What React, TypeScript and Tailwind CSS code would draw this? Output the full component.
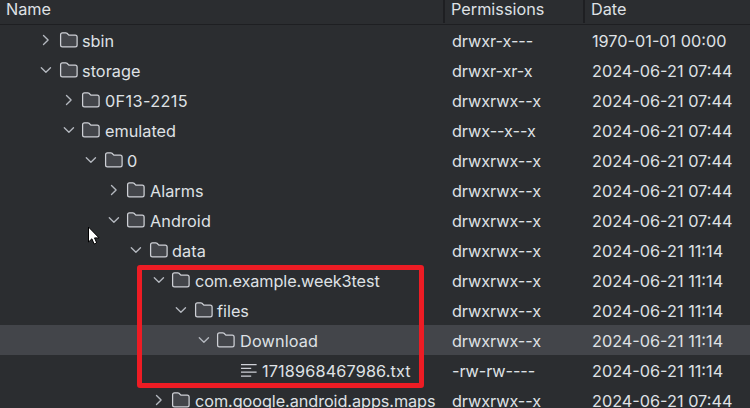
type Kind = "open" | "closed" | "file";

const rows: { name: string; pad: string; track: string; kind: Kind; perm: string; date: string; selected?: boolean; tight?: boolean }[] = [
  { name: "sbin", pad: "pl-[38px]", track: "", kind: "closed", perm: "drwxr-x---", date: "1970-01-01 00:00" },
  { name: "storage", pad: "pl-[38px]", track: "tracking-[0.06px]", kind: "open", perm: "drwxr-xr-x", date: "2024-06-21 07:44" },
  { name: "0F13-2215", pad: "pl-[61px]", tight: true, track: "tracking-[0.35px]", kind: "closed", perm: "drwxrwx--x", date: "2024-06-21 07:44" },
  { name: "emulated", pad: "pl-[61px]", tight: true, track: "", kind: "open", perm: "drwx--x--x", date: "2024-06-21 07:44" },
  { name: "0", pad: "pl-[83px]", track: "", kind: "open", perm: "drwxrwx--x", date: "2024-06-21 07:44" },
  { name: "Alarms", pad: "pl-[106px]", tight: true, track: "", kind: "closed", perm: "drwxrwx--x", date: "2024-06-21 07:44" },
  { name: "Android", pad: "pl-[106px]", tight: true, track: "tracking-[0.1px]", kind: "open", perm: "drwxrwx--x", date: "2024-06-21 07:44" },
  { name: "data", pad: "pl-[128px]", track: "tracking-[0.12px]", kind: "open", perm: "drwxrwx--x", date: "2024-06-21 11:14" },
  { name: "com.example.week3test", pad: "pl-[151px]", tight: true, track: "tracking-[-0.1px]", kind: "open", perm: "drwxrwx--x", date: "2024-06-21 11:14" },
  { name: "files", pad: "pl-[173px]", track: "", kind: "open", perm: "drwxrwx--x", date: "2024-06-21 11:14" },
  { name: "Download", pad: "pl-[196px]", tight: true, track: "tracking-[0.15px]", kind: "open", perm: "drwxrwx--x", date: "2024-06-21 11:14", selected: true },
  { name: "1718968467986.txt", pad: "pl-[218px]", track: "tracking-[0.14px]", kind: "file", perm: "-rw-rw----", date: "2024-06-21 11:14" },
  { name: "com.google.android.apps.maps", pad: "pl-[151px]", tight: true, track: "tracking-[-0.07px]", kind: "closed", perm: "drwxrwx--x", date: "2024-06-21 07:44" },
];

function Chevron({ kind }: { kind: Kind }) {
  return (
    <svg className="h-4 w-4 shrink-0" viewBox="0 0 16 16" fill="none" stroke="#b4b8bf" strokeWidth="1.35" strokeLinecap="round" strokeLinejoin="round">
      {kind === "closed" && <path d="M5.5 3.4 10.1 8 5.5 12.6" />}
      {kind === "open" && <path d="M3.3 5.7 7.9 10.3 12.5 5.7" />}
    </svg>
  );
}

function ItemIcon({ kind }: { kind: Kind }) {
  return (
    <svg className="h-5 w-5 shrink-0" viewBox="0 0 20 20" fill="none" stroke="#ced0d6" strokeWidth="1.25">
      {kind === "file" ? (
        <path d="M3 4.5h15.6M3 8.4h10.2M3 12.2h15.6M3 16h10.2" />
      ) : (
        <path
          d="M2.6 4.7c0-1.1.8-1.9 1.9-1.9h3.3c.5 0 .9.2 1.2.5l1.9 1.9h6.3c1.1 0 1.9.8 1.9 1.9V15c0 1.1-.8 1.9-1.9 1.9H4.5c-1.1 0-1.9-.8-1.9-1.9z"
          fill="#43454a"
        />
      )}
    </svg>
  );
}

export default function App() {
  return (
    <div className="relative h-[408px] w-[750px] overflow-hidden bg-[#2b2d30] font-['Inter',sans-serif] text-[16.25px] leading-[30px] text-[#dfe1e5]">
      <div className="flex h-[25px] items-start border-b border-[#1e1f22] leading-[19px]">
        <div className="h-[23px] w-[443px] pl-[6px]">Name</div>
        <div className="h-[23px] w-[140px] border-l-2 border-[#1e1f22] pl-[6px]">Permissions</div>
        <div className="h-[23px] flex-1 border-l-2 border-[#1e1f22] pl-[6px]">Date</div>
      </div>
      {rows.map((r) => (
        <div key={r.name} className={`flex h-[30px] whitespace-nowrap ${r.selected ? "bg-[#43454a]" : ""}`}>
          <div className={`flex w-[452px] shrink-0 items-center ${r.pad} ${r.tight ? "gap-[3px]" : "gap-[4px]"}`}>
            <Chevron kind={r.kind} />
            <ItemIcon kind={r.kind} />
            <span className={`mt-[2px] ${r.tight ? "ml-[2px]" : ""} ${r.track}`}>{r.name}</span>
          </div>
          <div className="mt-[1px] w-[140px] shrink-0 tracking-[-0.08px]">{r.perm}</div>
          <div className="mt-[1px]">{r.date}</div>
        </div>
      ))}
      <div className="absolute left-[137px] top-[265px] h-[123px] w-[287px] rounded-[3px] border-[5px] border-[#ed1c24]" />
      <svg className="absolute left-[88px] top-[226px] h-[20px] w-[14px]" viewBox="0 0 14 20">
        <path d="M.5 1v15l3.4-3.2 2.2 5.2 2.6-1.1-2.2-5h4.6z" fill="#fff" stroke="#000" strokeWidth="1" />
      </svg>
    </div>
  );
}
